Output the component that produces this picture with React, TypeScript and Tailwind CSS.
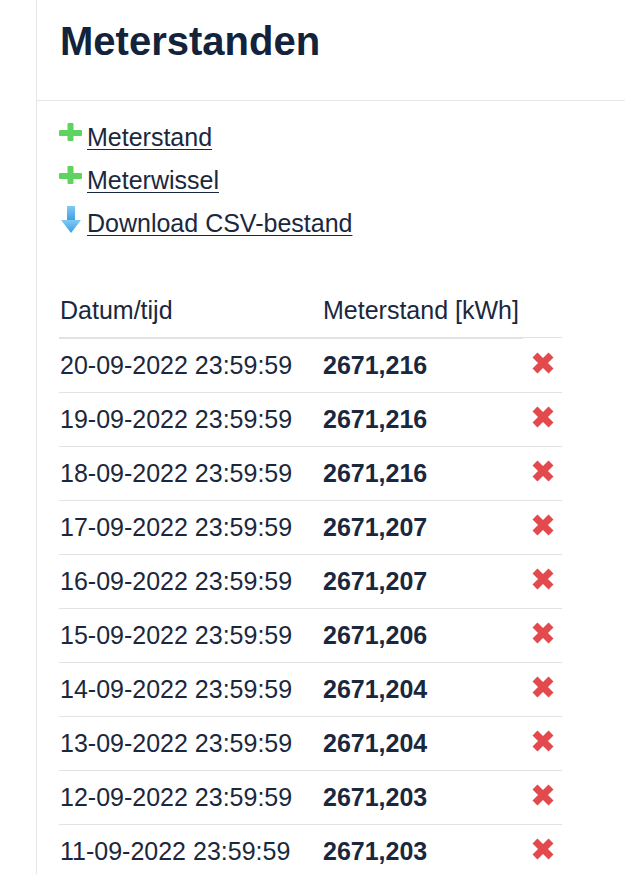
const readings = [
  { date: "20-09-2022 23:59:59", value: "2671,216" },
  { date: "19-09-2022 23:59:59", value: "2671,216" },
  { date: "18-09-2022 23:59:59", value: "2671,216" },
  { date: "17-09-2022 23:59:59", value: "2671,207" },
  { date: "16-09-2022 23:59:59", value: "2671,207" },
  { date: "15-09-2022 23:59:59", value: "2671,206" },
  { date: "14-09-2022 23:59:59", value: "2671,204" },
  { date: "13-09-2022 23:59:59", value: "2671,204" },
  { date: "12-09-2022 23:59:59", value: "2671,203" },
  { date: "11-09-2022 23:59:59", value: "2671,203" },
];

function PlusIcon() {
  return (
    <svg width="23" height="18" viewBox="0 0 23 18" className="mt-[7px]">
      <rect x="0" y="7" width="23" height="6" rx="1" fill="#5fd35f" />
      <rect x="8.5" y="0" width="6" height="18" rx="1" fill="#5fd35f" />
    </svg>
  );
}

function DownloadIcon() {
  return (
    <svg width="22" height="27" viewBox="0 0 22 27" className="mt-[4px] ml-[1px]">
      <defs>
        <linearGradient id="dl" x1="0" y1="0" x2="0" y2="1">
          <stop offset="0" stopColor="#7fcaf3" />
          <stop offset="1" stopColor="#3d9de0" />
        </linearGradient>
      </defs>
      <rect x="7" y="0" width="8" height="15" fill="url(#dl)" />
      <polygon points="1,14 21,14 11,27" fill="url(#dl)" />
    </svg>
  );
}

function DeleteIcon() {
  return (
    <svg width="24" height="24" viewBox="0 0 24 24">
      <path d="M4 4 L20 20 M20 4 L4 20" stroke="#e24a4d" strokeWidth="7" />
    </svg>
  );
}

function ActionLink({ icon, label }: { icon: React.ReactNode; label: string }) {
  return (
    <div className="flex h-[43px] items-start">
      <div className="w-[28px] shrink-0">{icon}</div>
      <a href="#" className="leading-[43px] underline decoration-1 underline-offset-[3px]">
        {label}
      </a>
    </div>
  );
}

export default function App() {
  return (
    <div className="min-h-screen bg-white font-['Liberation_Sans',Arial,sans-serif] text-[25px] text-[#1a283e]">
      <div className="ml-[36px] min-h-screen border-l border-[#e6e6e6]">
        <div className="h-[101px] border-b border-[#e6e6e6] pl-[23px] pt-[19px]">
          <h1 className="text-[40px] font-bold leading-[44px] text-[#12233b]">Meterstanden</h1>
        </div>

        <div className="pl-[22px] pt-[15px]">
          <ActionLink icon={<PlusIcon />} label="Meterstand" />
          <ActionLink icon={<PlusIcon />} label="Meterwissel" />
          <ActionLink icon={<DownloadIcon />} label="Download CSV-bestand" />
        </div>

        <div className="mt-[40px] ml-[22px] w-[503px]">
          <div className="flex items-start">
            <div className="flex h-[54px] w-[264px] items-center border-b-2 border-[#e2e2e2] pl-[1px]">Datum/tijd</div>
            <div className="flex h-[54px] w-[200px] items-center border-b-2 border-[#e2e2e2]">Meterstand [kWh]</div>
            <div className="h-[53px] w-[39px] border-b border-[#e2e2e2]"></div>
          </div>
          {readings.map((r) => (
            <div key={r.date} className="flex h-[54px] items-center border-b border-[#e2e2e2]">
              <div className="w-[264px] pl-[1px]">{r.date}</div>
              <div className="w-[200px] font-bold">{r.value}</div>
              <div className="flex w-[39px] justify-center pb-[6px]">
                <DeleteIcon />
              </div>
            </div>
          ))}
        </div>
      </div>
    </div>
  );
}
